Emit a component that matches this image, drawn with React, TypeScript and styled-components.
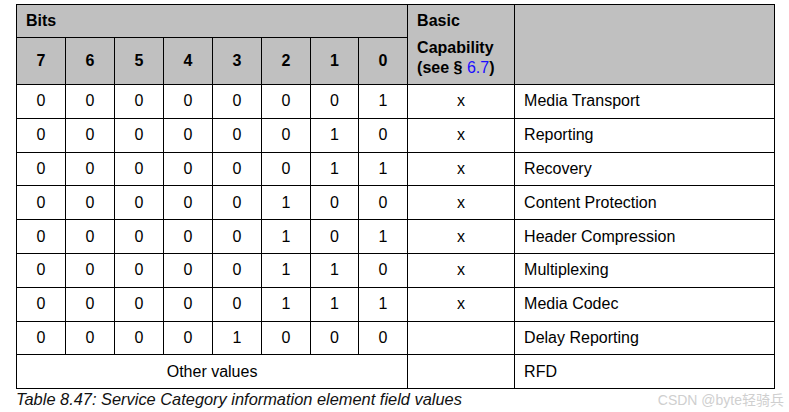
import React from "react";
import styled, { createGlobalStyle } from "styled-components";

const Global = createGlobalStyle`
  html, body { margin: 0; padding: 0; background: #fff; }
  body { font-family: "Liberation Sans", Arial, sans-serif; color: #000; }
`;

const Page = styled.div`
  width: 789px;
  height: 412px;
  box-sizing: border-box;
  padding: 4px 0 0 16px;
  overflow: hidden;
`;

const Table = styled.table`
  border-collapse: collapse;
  table-layout: fixed;
  width: 758px;
  font-size: 16px;
`;

const HeadCell = styled.th<{ $align?: "left" | "center"; $top?: boolean }>`
  background: #c0c0c0;
  border: 1px solid #000;
  font-weight: bold;
  text-align: ${(p) => p.$align ?? "center"};
  vertical-align: ${(p) => (p.$top ? "top" : "middle")};
  padding: ${(p) => (p.$align === "left" ? "0 9px" : "0")};
  line-height: 20px;
`;

const Cell = styled.td<{ $align?: "left" | "center" }>`
  border: 1px solid #000;
  text-align: ${(p) => p.$align ?? "center"};
  vertical-align: middle;
  padding: ${(p) => (p.$align === "left" ? "0 9px" : "0")};
  white-space: nowrap;
`;

const TitleRow = styled.tr`
  height: 33px;
`;

const BitRow = styled.tr`
  height: 47px;
`;

const DataRow = styled.tr`
  height: 33.8px;
`;

const CapTitle = styled.div`
  padding-top: 6px;
  margin-bottom: 7px;
`;

const Link = styled.span`
  color: #1a0dff;
  font-weight: normal;
`;

const Footer = styled.div`
  display: flex;
  justify-content: space-between;
  align-items: center;
  width: 768px;
  margin-top: 0px;
`;

const Caption = styled.div`
  font-style: italic;
  font-size: 16.4px;
  color: #111;
  line-height: 19px;
`;

const Watermark = styled.div`
  font-family: "Liberation Sans", "Noto Sans CJK SC", sans-serif;
  font-size: 14px;
  color: #cfcfcf;
  line-height: 19px;
  padding-top: 2px;
`;

const rows: { bits: string; cap: boolean; name: string }[] = [
  { bits: "00000001", cap: true, name: "Media Transport" },
  { bits: "00000010", cap: true, name: "Reporting" },
  { bits: "00000011", cap: true, name: "Recovery" },
  { bits: "00000100", cap: true, name: "Content Protection" },
  { bits: "00000101", cap: true, name: "Header Compression" },
  { bits: "00000110", cap: true, name: "Multiplexing" },
  { bits: "00000111", cap: true, name: "Media Codec" },
  { bits: "00001000", cap: false, name: "Delay Reporting" },
];

export default function App() {
  return (
    <>
      <Global />
      <Page>
        <Table>
          <colgroup>
            {[49, 49, 49, 49, 49, 49, 48, 49].map((w, i) => (
              <col key={i} style={{ width: w }} />
            ))}
            <col style={{ width: 107 }} />
            <col style={{ width: 260 }} />
          </colgroup>
          <thead>
            <TitleRow>
              <HeadCell colSpan={8} $align="left">
                Bits
              </HeadCell>
              <HeadCell rowSpan={2} $align="left" $top>
                <CapTitle>Basic</CapTitle>
                Capability
                <br />
                (see § <Link>6.7</Link>)
              </HeadCell>
              <HeadCell rowSpan={2} />
            </TitleRow>
            <BitRow>
              {["7", "6", "5", "4", "3", "2", "1", "0"].map((b) => (
                <HeadCell key={b}>{b}</HeadCell>
              ))}
            </BitRow>
          </thead>
          <tbody>
            {rows.map((r) => (
              <DataRow key={r.name}>
                {r.bits.split("").map((b, i) => (
                  <Cell key={i}>{b}</Cell>
                ))}
                <Cell>{r.cap ? "x" : ""}</Cell>
                <Cell $align="left">{r.name}</Cell>
              </DataRow>
            ))}
            <DataRow>
              <Cell colSpan={8}>Other values</Cell>
              <Cell />
              <Cell $align="left">RFD</Cell>
            </DataRow>
          </tbody>
        </Table>
        <Footer>
          <Caption>Table 8.47: Service Category information element field values</Caption>
          <Watermark>CSDN @byte轻骑兵</Watermark>
        </Footer>
      </Page>
    </>
  );
}
